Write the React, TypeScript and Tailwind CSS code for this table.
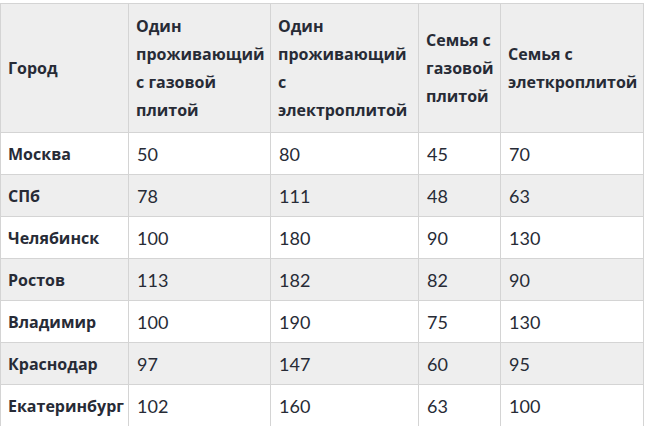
const HEAD = [
  'Город',
  'Один проживающий с газовой плитой',
  'Один проживающий с электроплитой',
  'Семья с газовой плитой',
  'Семья с элеткроплитой',
];

const ROWS: [string, number, number, number, number][] = [
  ['Москва', 50, 80, 45, 70],
  ['СПб', 78, 111, 48, 63],
  ['Челябинск', 100, 180, 90, 130],
  ['Ростов', 113, 182, 82, 90],
  ['Владимир', 100, 190, 75, 130],
  ['Краснодар', 97, 147, 60, 95],
  ['Екатеринбург', 102, 160, 63, 100],
];

const WIDTHS = ['w-[128px]', 'w-[142px]', 'w-[148px]', 'w-[82px]', 'w-[143px]'];

export default function App() {
  return (
    <div
      className="bg-white pt-[3px] text-[16px] text-[#272b36]"
      style={{ fontFamily: '"Open Sans", "Noto Sans", sans-serif' }}
    >
      <table className="table-fixed border-collapse w-[643px]">
        <thead>
          <tr className="bg-[#eeeeee]">
            {HEAD.map((h, i) => (
              <th
                key={h}
                className={`${WIDTHS[i]} border border-[#d4d4d4] px-[7px] py-[8px] text-left align-middle font-bold leading-[28px]`}
              >
                {h}
              </th>
            ))}
          </tr>
        </thead>
        <tbody>
          {ROWS.map((r, i) => (
            <tr key={r[0]} className={i % 2 === 1 ? 'bg-[#eeeeee]' : 'bg-white'}>
              {r.map((c, j) =>
                j === 0 ? (
                  <td
                    key={j}
                    className="border border-[#d4d4d4] px-[7px] h-[42px] align-middle leading-[28px] whitespace-nowrap font-bold"
                  >
                    {c}
                  </td>
                ) : (
                  <td
                    key={j}
                    className="border border-[#d4d4d4] px-[8px] h-[42px] align-middle leading-[28px] whitespace-nowrap font-['Lato',sans-serif] text-[18px]"
                  >
                    {c}
                  </td>
                ),
              )}
            </tr>
          ))}
        </tbody>
      </table>
    </div>
  );
}
